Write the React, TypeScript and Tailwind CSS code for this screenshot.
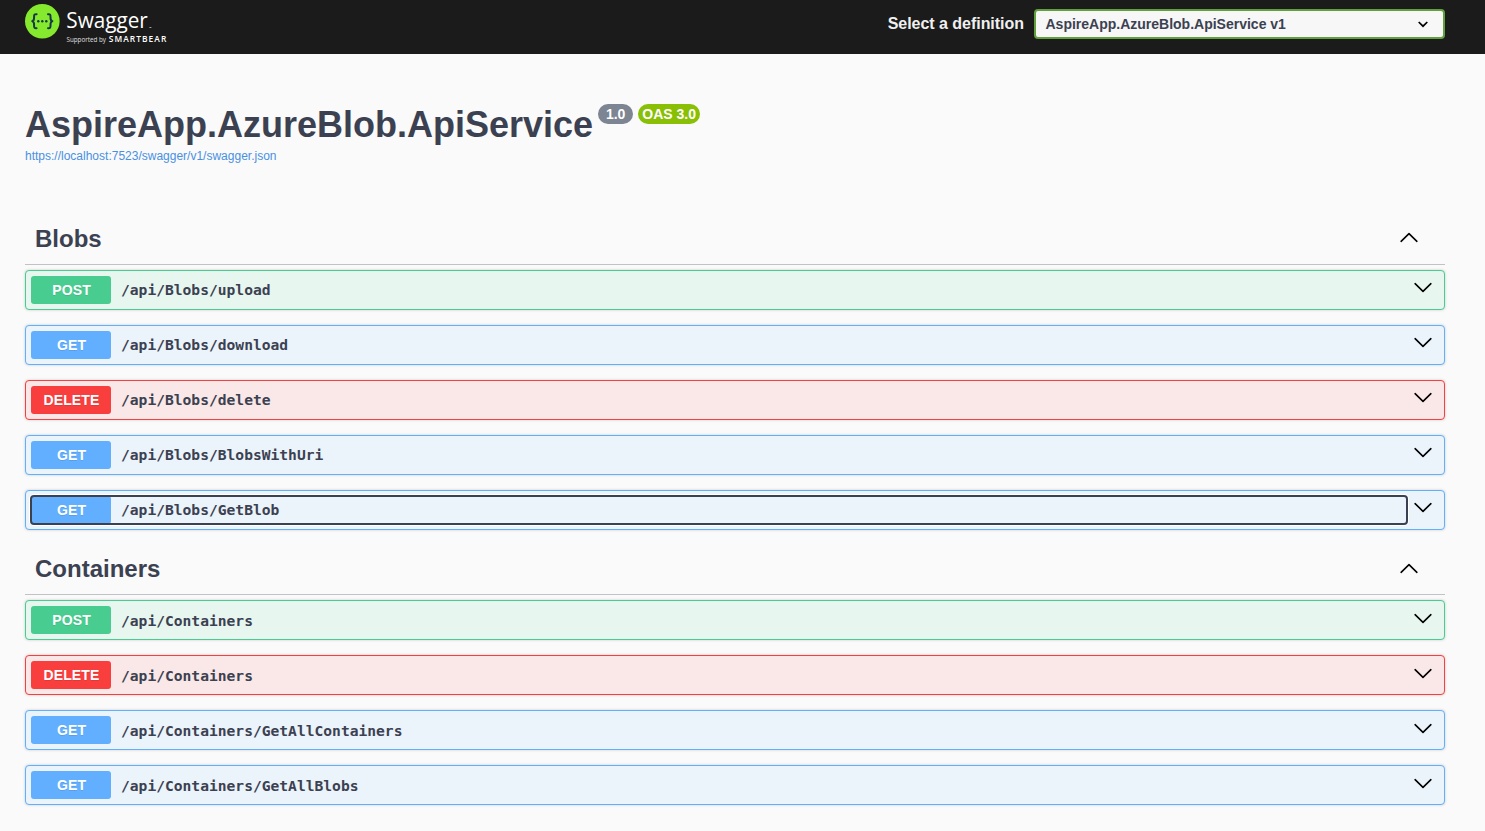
type Method = 'POST' | 'GET' | 'DELETE';

interface Operation {
  method: Method;
  path: string;
  focused?: boolean;
}

interface Tag {
  name: string;
  nudge: string;
  operations: Operation[];
}

const tags: Tag[] = [
  {
    name: 'Blobs',
    nudge: '',
    operations: [
      { method: 'POST', path: '/api/Blobs/upload' },
      { method: 'GET', path: '/api/Blobs/download' },
      { method: 'DELETE', path: '/api/Blobs/delete' },
      { method: 'GET', path: '/api/Blobs/BlobsWithUri' },
      { method: 'GET', path: '/api/Blobs/GetBlob', focused: true },
    ],
  },
  {
    name: 'Containers',
    nudge: 'pt-[2px]',
    operations: [
      { method: 'POST', path: '/api/Containers' },
      { method: 'DELETE', path: '/api/Containers' },
      { method: 'GET', path: '/api/Containers/GetAllContainers' },
      { method: 'GET', path: '/api/Containers/GetAllBlobs' },
    ],
  },
];

const rowStyle: Record<Method, string> = {
  POST: 'border-[#49cc90] bg-[#e8f6f0]',
  GET: 'border-[#61affe] bg-[#ebf3fb]',
  DELETE: 'border-[#f93e3e] bg-[#fae7e7]',
};

const badgeStyle: Record<Method, string> = {
  POST: 'bg-[#49cc90]',
  GET: 'bg-[#61affe]',
  DELETE: 'bg-[#f93e3e]',
};

function Chevron({ up = false }: { up?: boolean }) {
  return (
    <svg width="20" height="12" viewBox="0 0 20 12" className="block" fill="none" stroke="#000" strokeWidth="1.6" strokeLinecap="round" strokeLinejoin="round">
      <path d={up ? 'M2.1 10.3 L10 2.7 L17.9 10.3' : 'M2.1 2.7 L10 10.3 L17.9 2.7'} />
    </svg>
  );
}

function Logo() {
  return (
    <svg width="145" height="46" viewBox="0 0 145 46" className="block">
      <circle cx="17.3" cy="21.2" r="17.3" fill="#85ea2d" />
      <g fill="none" stroke="#173647" strokeWidth="2" strokeLinecap="round" strokeLinejoin="round">
        <path d="M11.6 14.2 C9.4 14 9 14.9 9.1 17 C9.2 19.8 9 21 7.2 21.2 C9 21.4 9.2 22.6 9.1 25.4 C9 27.5 9.4 28.4 11.6 28.2" />
        <path d="M23 14.2 C25.2 14 25.6 14.9 25.5 17 C25.4 19.8 25.6 21 27.4 21.2 C25.6 21.4 25.4 22.6 25.5 25.4 C25.6 27.5 25.2 28.4 23 28.2" />
      </g>
      <g fill="#173647">
        <circle cx="13.3" cy="21.2" r="1.2" />
        <circle cx="17.3" cy="21.2" r="1.2" />
        <circle cx="21.3" cy="21.2" r="1.2" />
      </g>
      <g fill="#fff">
        <text x="41.3" y="28.2" fontFamily="Open Sans, sans-serif" fontSize="22.5" textLength="81.5" lengthAdjust="spacingAndGlyphs">Swagger</text>
        <rect x="124.4" y="27" width="2" height="1" opacity="0.6" />
        <text x="41.5" y="42.3" fontFamily="Open Sans, sans-serif" fontSize="6.6" textLength="39.5" lengthAdjust="spacingAndGlyphs" opacity="0.85">Supported by</text>
        <text x="83.8" y="42.3" fontFamily="Open Sans, sans-serif" fontWeight="600" fontSize="8.4" textLength="57.5">SMARTBEAR</text>
      </g>
    </svg>
  );
}

function OperationRow({ method, path, focused, nudge }: Operation & { nudge: string }) {
  return (
    <div className={`flex h-10 items-center rounded border pl-[5px] shadow-[0_0_3px_rgba(0,0,0,0.19)] ${rowStyle[method]}`}>
      <button
        className={`flex h-7 w-[1376px] items-center rounded-[3px] text-left ${focused ? 'shadow-[0_0_0_2px_#fff] outline-2 -outline-offset-1 outline-[#3b4151]' : ''}`}
      >
        <span
          className={`flex h-7 w-20 items-center justify-center rounded-[3px] pl-px text-sm font-bold tracking-[0.15px] text-white [text-shadow:0_1px_0_rgba(0,0,0,0.1)] ${badgeStyle[method]}`}
        >
          {method}
        </span>
        <span className={`pl-2.5 font-['DejaVu_Sans_Mono',monospace] text-[14.62px] leading-5 font-bold ${nudge}`}>{path}</span>
      </button>
      <span className="ml-[6px] flex h-7 items-start pt-[5px]">
        <span className={nudge ? 'pt-px' : ''}>
          <Chevron />
        </span>
      </span>
    </div>
  );
}

function TagSection({ name, nudge, operations }: Tag) {
  return (
    <section>
      <div className="flex h-[50px] items-center justify-between border-b border-[#3b4151]/30 pr-[26px] pl-2.5">
        <h3 className="pb-0.5 text-2xl leading-6 font-bold">{name}</h3>
        <span className={nudge ? 'pb-[3px]' : 'pb-[5px]'}>
          <Chevron up />
        </span>
      </div>
      <div className="flex flex-col gap-[15px] pt-[5px]">
        {operations.map((op) => (
          <OperationRow key={op.method + op.path} {...op} nudge={nudge} />
        ))}
      </div>
    </section>
  );
}

export default function App() {
  return (
    <div className="h-[831px] overflow-hidden bg-[#fafafa] font-['Liberation_Sans',Arial,sans-serif] text-[#3b4151]">
      <header className="flex h-[54px] items-start justify-between bg-[#1b1b1b] pr-10 pl-[25px]">
        <Logo />
        <div className="flex items-center gap-[10px] pt-[9px]">
          <span className="text-base leading-6 font-bold tracking-[-0.03px] text-[#f0f0f0]">Select a definition</span>
          <div className="flex h-[30px] w-[411px] items-center justify-between rounded border-2 border-[#62a03f] bg-[#f7f7f7] pr-[15px] pl-[9.5px] text-sm font-bold">
            <span>AspireApp.AzureBlob.ApiService v1</span>
            <svg width="10" height="7" viewBox="0 0 10 7" fill="none" stroke="#000" strokeWidth="1.7">
              <path d="M0.7 1 L5 5.2 L9.3 1" />
            </svg>
          </div>
        </div>
      </header>
      <main className="pr-10 pl-[25px]">
        <div className="flex items-start pt-[50px]">
          <h2 className="text-4xl leading-[41px] font-bold">AspireApp.AzureBlob.ApiService</h2>
          <span className="ml-[5px] flex h-5 w-[35px] items-center justify-center rounded-full bg-[#7d8492] text-sm font-bold text-white">1.0</span>
          <span className="ml-[5px] flex h-5 w-[62px] items-center justify-center rounded-full bg-[#89bf04] text-sm font-bold text-white">OAS 3.0</span>
        </div>
        <a className="block pt-[3px] text-xs leading-4 text-[#4990e2]">https://localhost:7523/swagger/v1/swagger.json</a>
        <div className="flex flex-col gap-[15px] pt-[51px]">
          {tags.map((tag) => (
            <TagSection key={tag.name} {...tag} />
          ))}
        </div>
      </main>
    </div>
  );
}
